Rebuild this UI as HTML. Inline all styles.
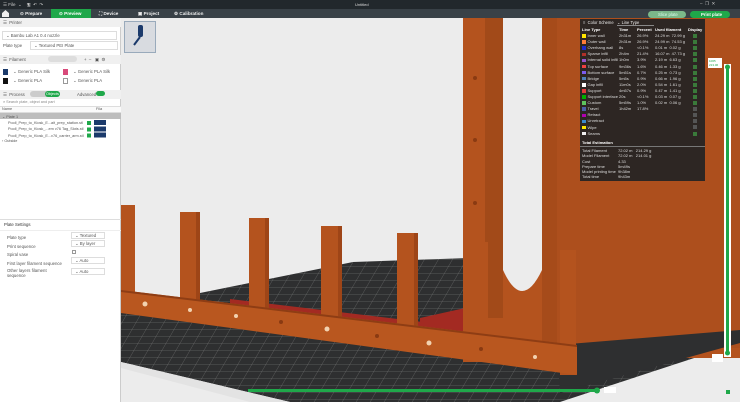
<!DOCTYPE html><html><head><style>
*{margin:0;padding:0;box-sizing:border-box}
body{width:740px;height:402px;overflow:hidden;background:#ececec;font-family:"Liberation Sans",sans-serif;position:relative}
.a{position:absolute;white-space:nowrap}
.t{font-size:4.3px;color:#555}
.box{position:absolute;border:1px solid #ddd;background:#fff;font-size:4.3px;color:#555;padding-left:3px;line-height:8px}
.lg{position:absolute;left:580px;width:125px}
.r{height:6.1px;line-height:6.1px;font-size:4px;color:#ddd;position:relative}
.r span{position:absolute;top:0}
.r span:nth-child(1){left:2px}.r span:nth-child(2){left:39px}.r span:nth-child(3){left:57px}.r span:nth-child(4){left:75px}.r span:nth-child(5){left:113px}
.sq{display:inline-block;width:3.5px;height:3.5px;margin-right:2px;vertical-align:middle}
.ck{display:inline-block;width:4px;height:4px;background:#3a7a3a;vertical-align:middle}
</style></head><body>
<div class="a" style="left:0;top:0;width:740px;height:9px;background:#22282c"></div>
<div class="a t" style="left:3px;top:1px;color:#ccc;font-size:4.5px">☰ File &nbsp;⌄ &nbsp;&nbsp; 🖫 &nbsp;↶ &nbsp;↷</div>
<div class="a t" style="left:355px;top:2px;color:#ddd;font-size:4px">Untitled</div>
<div class="a t" style="left:700px;top:1px;color:#ccc;font-size:4.5px">– &nbsp;❐ &nbsp;✕</div>
<div class="a" style="left:0;top:9px;width:740px;height:9px;background:#394147"></div>
<div class="a" style="left:51px;top:9px;width:40px;height:9px;background:#1fa84a"></div>
<div class="a" style="left:2px;top:10px;width:7px;height:7px;background:#eee;clip-path:polygon(50% 0,100% 45%,100% 100%,0 100%,0 45%)"></div>
<div class="a t" style="left:20px;top:11px;color:#eee;font-size:4.6px;font-weight:bold">⊙ Prepare</div>
<div class="a t" style="left:59px;top:11px;color:#fff;font-size:4.6px;font-weight:bold">⊙ Preview</div>
<div class="a t" style="left:99px;top:11px;color:#eee;font-size:4.6px;font-weight:bold">⛶ Device</div>
<div class="a t" style="left:138px;top:11px;color:#eee;font-size:4.6px;font-weight:bold">▣ Project</div>
<div class="a t" style="left:174px;top:11px;color:#eee;font-size:4.6px;font-weight:bold">⚙ Calibration</div>
<div class="a" style="left:648px;top:11px;width:38px;height:7px;border-radius:4px;background:#7bb88a"></div>
<div class="a t" style="left:658px;top:12px;color:#dfe;font-size:4.3px">Slice plate</div>
<div class="a" style="left:690px;top:11px;width:40px;height:7px;border-radius:4px;background:#1fa84a"></div>
<div class="a t" style="left:701px;top:12px;color:#fff;font-size:4.3px;font-weight:bold">Print plate</div>

<svg class="a" style="left:121px;top:18px" width="619" height="384" viewBox="121 18 619 384">
<defs><pattern id="g" width="14" height="7" patternUnits="userSpaceOnUse" patternTransform="skewX(-30)"><rect width="14" height="7" fill="#2e2f30"/><path d="M0 0H14M0 0V7" stroke="#8a8a8a" stroke-width=".5"/></pattern></defs>
<polygon points="121,310 200,293 353,262 470,258 740,250 740,343 560,402 290,402 121,362" fill="url(#g)"/>
<polygon points="121,362 290,402 250,402 121,368" fill="#e3e3e3"/>
<rect x="463" y="18" width="277" height="340" fill="#b4531e"/>
<rect x="485" y="18" width="18" height="300" fill="#a24a19"/>
<path d="M503 18 V270 Q522 312 542 270 V18 Z" fill="#ececec"/>
<rect x="542" y="18" width="15" height="330" fill="#a64b1a"/>
<rect x="557" y="18" width="183" height="330" fill="#ad4f1d"/>
<polygon points="557,345 740,330 740,343 560,393" fill="#2e2f30"/>
<polygon points="230,299 465,327 465,335 230,305" fill="#a32a22"/>
<polygon points="420,318 465,308 465,330 420,326" fill="#a32a22"/>
<g fill="#b4531e">
<rect x="121" y="205" width="14" height="90"/>
<rect x="180" y="212" width="20" height="90"/>
<rect x="249" y="218" width="20" height="95"/>
<rect x="321" y="226" width="21" height="100"/>
<rect x="397" y="233" width="21" height="100"/>
<rect x="463" y="242" width="25" height="120"/>
<rect x="560" y="250" width="16" height="125"/>
</g>
<g fill="#9e4517"><rect x="196" y="212" width="4" height="90"/><rect x="265" y="218" width="4" height="95"/><rect x="338" y="226" width="4" height="100"/><rect x="414" y="233" width="4" height="100"/></g>
<polygon points="121,290 577,345 577,375 121,313" fill="#b9571f"/>
<polygon points="121,290 577,345 577,347 121,292" fill="#8e3d14"/>
<g fill="#f2d2b0"><circle cx="145" cy="304" r="2.5"/><circle cx="190" cy="310" r="2"/><circle cx="236" cy="316" r="2"/><circle cx="327" cy="329" r="2.5"/><circle cx="429" cy="343" r="2.5"/><circle cx="535" cy="357" r="2"/></g>
<g fill="#8a3a12"><circle cx="281" cy="322" r="2"/><circle cx="377" cy="336" r="2"/><circle cx="481" cy="349" r="2"/><circle cx="475" cy="78" r="2"/><circle cx="475" cy="140" r="2"/><circle cx="475" cy="203" r="2"/></g>
<rect x="248" y="389" width="350" height="3" fill="#1fa84a"/>
<circle cx="597" cy="390.5" r="3" fill="#1fa84a"/>
<rect x="604" y="387" width="12" height="6" fill="#fff"/>
<rect x="724" y="64" width="7" height="293" fill="#fff"/>
<rect x="726" y="66" width="3" height="288" fill="#1fa84a"/>
<circle cx="727.5" cy="67" r="2.5" fill="#1fa84a"/><circle cx="727.5" cy="353" r="2.5" fill="#1fa84a"/>
<rect x="708" y="58" width="14" height="10" fill="#fff"/>
<rect x="712" y="354" width="11" height="8" fill="#fff"/>
<rect x="726" y="390" width="4" height="4" fill="#1fa84a"/>
</svg>
<div class="a t" style="left:709px;top:59px;font-size:3px;color:#1fa84a">1065<br>213.06</div>
<div class="a" style="left:124px;top:21px;width:32px;height:32px;background:#d8dbe0;border:1px solid #9ab"></div>
<svg class="a" style="left:130px;top:24px" width="20" height="26"><rect x="8" y="1" width="5" height="12" rx="2" fill="#1b3a6b"/><path d="M10 13 L4 21" stroke="#1b3a6b" stroke-width="2"/></svg>

<div class="a" style="left:580px;top:19px;width:125px;height:162px;background:#2d2623"></div>
<div class="a t" style="left:583px;top:20px;color:#eee;font-size:4.1px">≡ &nbsp;Color Scheme &nbsp; <span style="border-bottom:1px solid #888">⌄ Line Type &nbsp; &nbsp; &nbsp; &nbsp; &nbsp; &nbsp;&nbsp;</span></div>
<div class="lg" style="top:27px">
<div class="r" style="font-weight:bold;color:#fff"><span>Line Type</span><span>Time</span><span>Percent</span><span>Used filament</span><span style="left:108px">Display</span></div>
<div class="r"><span><i class="sq" style="background:#ffe600"></i>Inner wall</span><span>2h31m</span><span>26.9%</span><span>24.29 m &nbsp;72.99 g</span><span><i class="ck"></i></span></div>
<div class="r"><span><i class="sq" style="background:#ff7d38"></i>Outer wall</span><span>2h31m</span><span>26.9%</span><span>24.99 m &nbsp;74.53 g</span><span><i class="ck"></i></span></div>
<div class="r"><span><i class="sq" style="background:#1f2ccc"></i>Overhang wall</span><span>8s</span><span>&lt;0.1%</span><span>0.01 m &nbsp;0.02 g</span><span><i class="ck"></i></span></div>
<div class="r"><span><i class="sq" style="background:#b03029"></i>Sparse infill</span><span>2h4m</span><span>21.4%</span><span>16.07 m &nbsp;47.73 g</span><span><i class="ck"></i></span></div>
<div class="r"><span><i class="sq" style="background:#9654cc"></i>Internal solid infill</span><span>1h0m</span><span>3.9%</span><span>2.19 m &nbsp;6.63 g</span><span><i class="ck"></i></span></div>
<div class="r"><span><i class="sq" style="background:#f04040"></i>Top surface</span><span>9m36s</span><span>1.6%</span><span>0.46 m &nbsp;1.33 g</span><span><i class="ck"></i></span></div>
<div class="r"><span><i class="sq" style="background:#7c5cf0"></i>Bottom surface</span><span>5m51s</span><span>0.7%</span><span>0.25 m &nbsp;0.73 g</span><span><i class="ck"></i></span></div>
<div class="r"><span><i class="sq" style="background:#4d80ba"></i>Bridge</span><span>5m5s</span><span>0.9%</span><span>0.66 m &nbsp;1.96 g</span><span><i class="ck"></i></span></div>
<div class="r"><span><i class="sq" style="background:#fff"></i>Gap infill</span><span>11m0s</span><span>2.0%</span><span>0.54 m &nbsp;1.61 g</span><span><i class="ck"></i></span></div>
<div class="r"><span><i class="sq" style="background:#e03a3a"></i>Support</span><span>4m57s</span><span>0.9%</span><span>0.47 m &nbsp;1.41 g</span><span><i class="ck"></i></span></div>
<div class="r"><span><i class="sq" style="background:#00b000"></i>Support interface</span><span>20s</span><span>&lt;0.1%</span><span>0.03 m &nbsp;0.07 g</span><span><i class="ck"></i></span></div>
<div class="r"><span><i class="sq" style="background:#5ec45e"></i>Custom</span><span>5m59s</span><span>1.0%</span><span>0.02 m &nbsp;0.06 g</span><span><i class="ck"></i></span></div>
<div class="r"><span><i class="sq" style="background:#4b5fa8"></i>Travel</span><span>1h42m</span><span>17.8%</span><span></span><span><i class="ck" style="background:#555"></i></span></div>
<div class="r"><span><i class="sq" style="background:#b000b0"></i>Retract</span><span></span><span></span><span></span><span><i class="ck" style="background:#555"></i></span></div>
<div class="r"><span><i class="sq" style="background:#3a8ad0"></i>Unretract</span><span></span><span></span><span></span><span><i class="ck" style="background:#555"></i></span></div>
<div class="r"><span><i class="sq" style="background:#ffe600"></i>Wipe</span><span></span><span></span><span></span><span><i class="ck" style="background:#555"></i></span></div>
<div class="r"><span><i class="sq" style="background:#eee"></i>Seams</span><span></span><span></span><span></span><span><i class="ck"></i></span></div>
</div>
<div class="a t" style="left:582px;top:140px;color:#fff;font-weight:bold;font-size:4px">Total Estimation</div>
<div class="a" style="left:580px;top:146px;width:125px;height:1px;background:#777"></div>
<div class="a t" style="left:582px;top:148px;color:#ddd;line-height:5.3px;font-size:4px">Total Filament<br>Model Filament<br>Cost<br>Prepare time<br>Model printing time<br>Total time</div>
<div class="a t" style="left:618px;top:148px;color:#ddd;line-height:5.3px;font-size:4px">72.02 m &nbsp; 214.29 g<br>72.02 m &nbsp; 214.01 g<br>4.33<br>5m49s<br>9h38m<br>9h43m</div>

<div class="a" style="left:0;top:18px;width:121px;height:384px;background:#fff;border-right:1px solid #ccc"></div>
<div class="a" style="left:0;top:18px;width:121px;height:9px;background:#f0f0f0"></div>
<div class="a t" style="left:3px;top:20px">☰ &nbsp;Printer</div>
<div class="box" style="left:2px;top:31px;width:115px;height:9px">⌄ Bambu Lab A1 0.4 nozzle</div>
<div class="a t" style="left:3px;top:43px">Plate type</div>
<div class="box" style="left:30px;top:41px;width:88px;height:9px">⌄ Textured PEI Plate</div>
<div class="a" style="left:0;top:55px;width:121px;height:9px;background:#f0f0f0"></div>
<div class="a t" style="left:3px;top:57px">☰ &nbsp;Filament</div>
<div class="a" style="left:48px;top:56px;width:29px;height:6px;border-radius:3px;background:#ddd"></div>
<div class="a t" style="left:84px;top:57px">+ &nbsp;– &nbsp; ▣ &nbsp;⚙</div>
<div class="a" style="left:3px;top:69px;width:5px;height:6px;background:#1b3a6b"></div>
<div class="box" style="left:10px;top:68px;width:42px;height:9px;border:0">⌄ Generic PLA Silk</div>
<div class="a" style="left:63px;top:69px;width:5px;height:6px;background:#d84a7a"></div>
<div class="box" style="left:70px;top:68px;width:42px;height:9px;border:0">⌄ Generic PLA Silk</div>
<div class="a" style="left:3px;top:78px;width:5px;height:6px;background:#111"></div>
<div class="box" style="left:10px;top:77px;width:42px;height:9px;border:0">⌄ Generic PLA</div>
<div class="a" style="left:63px;top:78px;width:5px;height:6px;border:1px solid #999"></div>
<div class="box" style="left:70px;top:77px;width:42px;height:9px;border:0">⌄ Generic PLA</div>
<div class="a" style="left:0;top:90px;width:121px;height:9px;background:#f0f0f0"></div>
<div class="a t" style="left:3px;top:92px">☰ &nbsp;Process</div>
<div class="a" style="left:30px;top:91px;width:30px;height:6px;border-radius:3px;background:#ccc"></div>
<div class="a" style="left:45px;top:91px;width:15px;height:6px;border-radius:3px;background:#1fa84a"></div>
<div class="a t" style="left:46px;top:92px;color:#fff;font-size:3.8px">Objects</div>
<div class="a t" style="left:77px;top:92px">Advanced</div>
<div class="a" style="left:96px;top:91px;width:9px;height:5px;border-radius:3px;background:#1fa84a"></div>
<div class="a t" style="left:3px;top:100px;font-size:3.8px;color:#888">⌕ Search plate, object and part</div>
<div class="a" style="left:0;top:106px;width:121px;height:7px;background:#fafafa;border-top:1px solid #ddd;border-bottom:1px solid #ddd"></div>
<div class="a t" style="left:2px;top:107px;font-size:3.8px">Name</div>
<div class="a t" style="left:96px;top:107px;font-size:3.8px">Fila</div>
<div class="a" style="left:0;top:113px;width:121px;height:6px;background:#bdbdbd"></div>
<div class="a t" style="left:2px;top:113.5px;font-size:3.8px">⌄ Plate 1</div>
<div class="a t" style="left:8px;top:120px;font-size:3.8px;line-height:6.3px">Pooll_Prep_to_Kiosk_E...ait_prep_station.stl<br>Pooll_Prep_to_Kiosk_...em v76 Tag_Slots.stl<br>Pooll_Prep_to_Kiosk_E...v76_carrier_arm.stl</div>
<div class="a" style="left:87px;top:121px;width:4px;height:17px;background:repeating-linear-gradient(#1fa84a 0 4px,transparent 4px 6.3px)"></div>
<div class="a" style="left:94px;top:120px;width:12px;height:19px;background:repeating-linear-gradient(#1b3a6b 0 5px,transparent 5px 6.3px)"></div>
<div class="a t" style="left:2px;top:139px;font-size:3.8px">› Outside</div>
<div class="a" style="left:0;top:219px;width:121px;height:1px;background:#ddd"></div>
<div class="a t" style="left:4px;top:222px;color:#333">Plate Settings</div>
<div class="a" style="left:0;top:230px;width:121px;height:1px;background:#eee"></div>
<div class="a t" style="left:7px;top:234px;line-height:8.6px">Plate type<br>Print sequence<br>Spiral vase<br>First layer filament sequence</div>
<div class="a t" style="left:7px;top:268px;line-height:5px">Other layers filament<br>sequence</div>
<div class="box" style="left:71px;top:232px;width:34px;height:7px;line-height:6px">⌄ Textured PEI</div>
<div class="box" style="left:71px;top:240px;width:34px;height:7px;line-height:6px">⌄ By layer</div>
<div class="a" style="left:72px;top:250px;width:4px;height:4px;border:1px solid #999"></div>
<div class="box" style="left:71px;top:257px;width:34px;height:7px;line-height:6px">⌄ Auto</div>
<div class="box" style="left:71px;top:268px;width:34px;height:7px;line-height:6px">⌄ Auto</div>
</body></html>
